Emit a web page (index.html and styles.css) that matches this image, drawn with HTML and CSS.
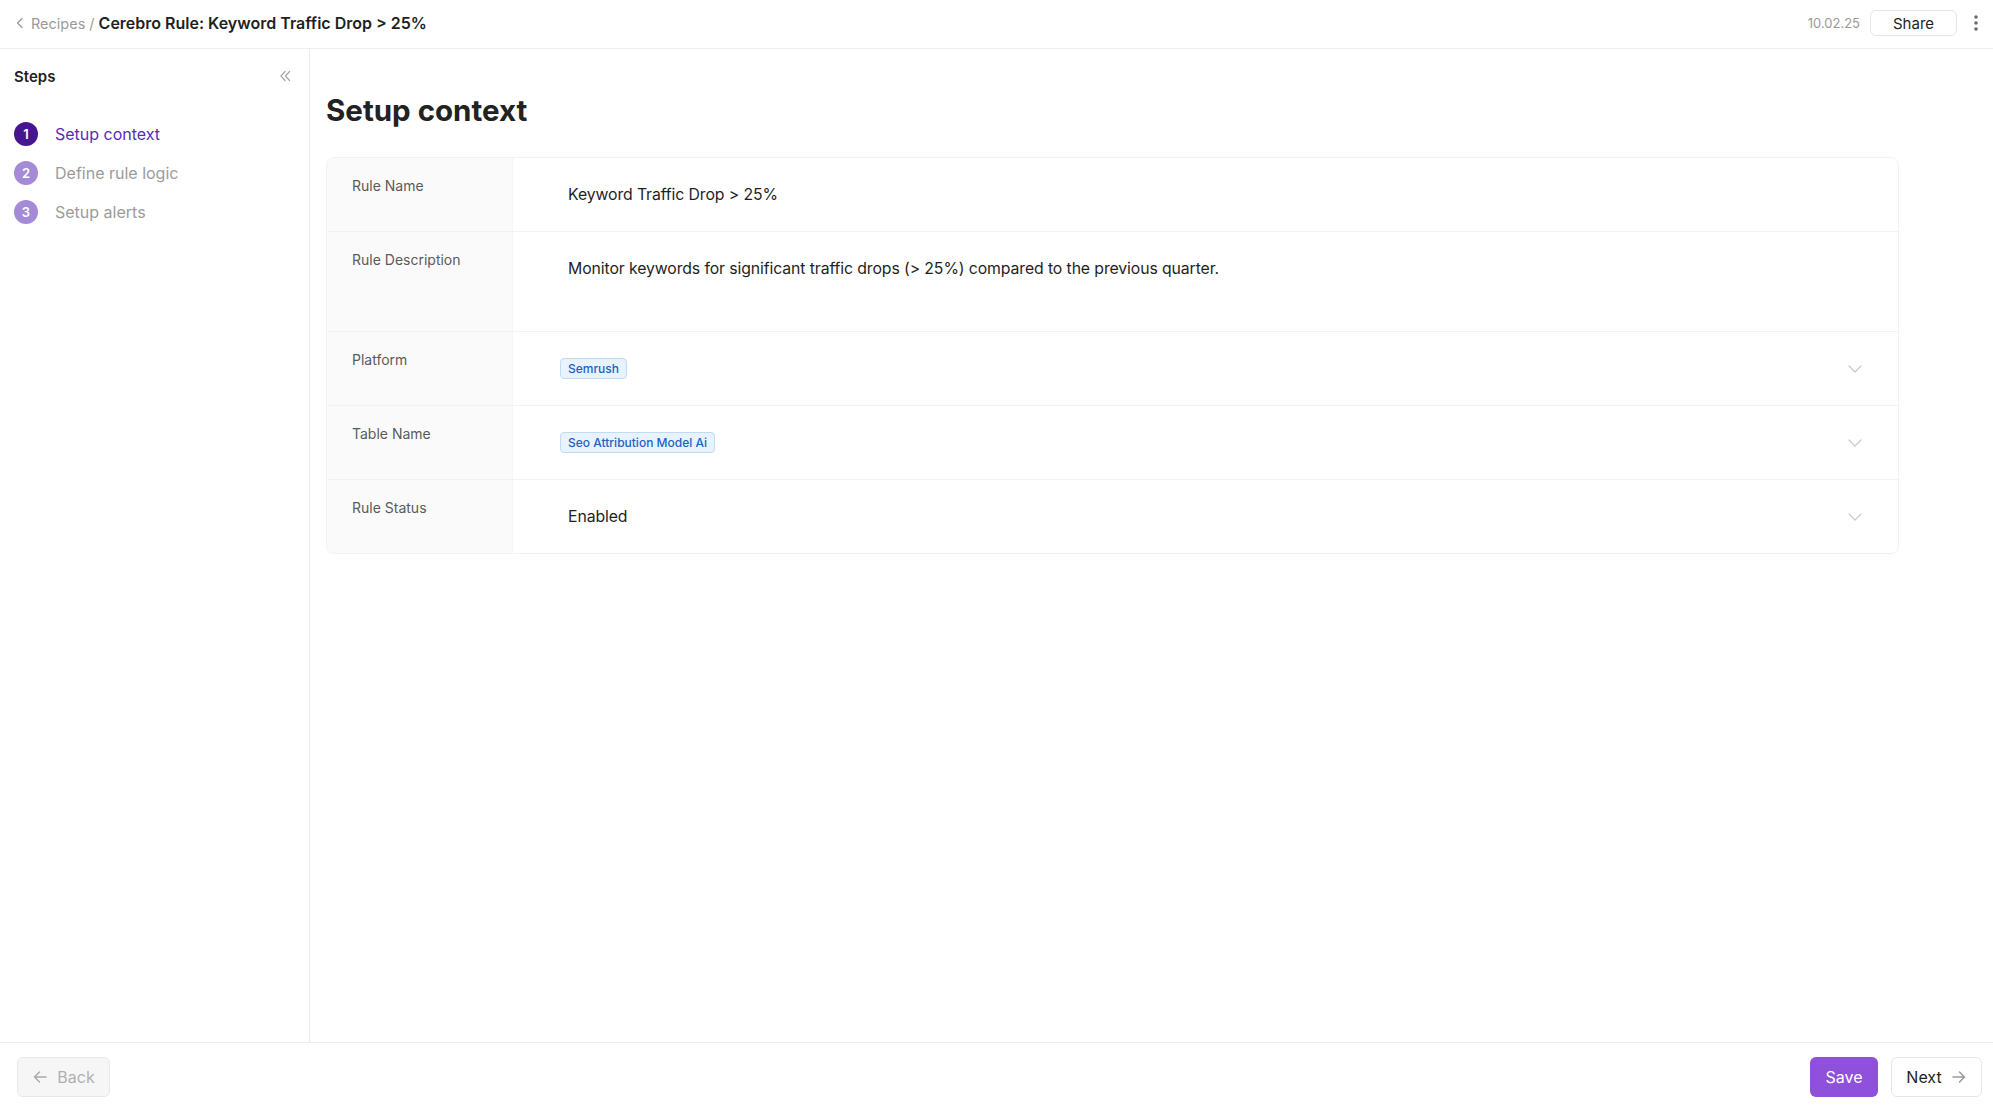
FILE: index.html
```html
<!DOCTYPE html>
<html lang="en">
<head>
    <meta charset="UTF-8">
    <meta name="viewport" content="width=device-width, initial-scale=1.0">
    <title>Cerebro Rule: Keyword Traffic Drop &gt; 25%</title>
    <link rel="stylesheet" href="styles.css">
</head>
<body>
    <header class="topbar">
        <div class="crumbs">
            <svg class="crumb-back" width="10" height="12" viewBox="0 0 10 12"><path d="M7 1.5 2.5 6 7 10.5" fill="none" stroke="#9a9a9a" stroke-width="1.3" stroke-linecap="round" stroke-linejoin="round"/></svg>
            <a href="#" class="crumb-link">Recipes</a>
            <span class="crumb-sep">/</span>
            <span class="crumb-title">Cerebro Rule: Keyword Traffic Drop &gt; 25%</span>
        </div>
        <div class="top-actions">
            <span class="date">10.02.25</span>
            <button class="share-btn">Share</button>
            <svg class="kebab" width="6" height="18" viewBox="0 0 6 18"><circle cx="3" cy="3" r="1.8" fill="#6b6b6b"/><circle cx="3" cy="9" r="1.8" fill="#6b6b6b"/><circle cx="3" cy="15" r="1.8" fill="#6b6b6b"/></svg>
        </div>
    </header>

    <div class="layout">
        <aside class="sidebar">
            <div class="sidebar-head">
                <span class="sidebar-title">Steps</span>
                <svg width="14" height="14" viewBox="0 0 14 14"><path d="M7 2.5 3 7l4 4.5M11.5 2.5 7.5 7l4 4.5" fill="none" stroke="#a5a5a5" stroke-width="1.2" stroke-linecap="round" stroke-linejoin="round"/></svg>
            </div>
            <ul class="steps">
                <li class="step active"><span class="step-num">1</span>Setup context</li>
                <li class="step"><span class="step-num">2</span>Define rule logic</li>
                <li class="step"><span class="step-num">3</span>Setup alerts</li>
            </ul>
        </aside>

        <main class="content">
            <h1>Setup context</h1>

            <div class="form-card">
                <div class="form-row">
                    <div class="form-label">Rule Name</div>
                    <div class="form-value"><span class="value-text">Keyword Traffic Drop &gt; 25%</span></div>
                </div>
                <div class="form-row">
                    <div class="form-label">Rule Description</div>
                    <div class="form-value tall"><span class="value-text">Monitor keywords for significant traffic drops (&gt; 25%) compared to the previous quarter.</span></div>
                </div>
                <div class="form-row">
                    <div class="form-label">Platform</div>
                    <div class="form-value select">
                        <span class="tag">Semrush</span>
                        <svg class="chev" width="14" height="8" viewBox="0 0 14 8"><path d="M1 1l6 6 6-6" fill="none" stroke="#c9c9c9" stroke-width="1.2" stroke-linecap="round" stroke-linejoin="round"/></svg>
                    </div>
                </div>
                <div class="form-row">
                    <div class="form-label">Table Name</div>
                    <div class="form-value select">
                        <span class="tag">Seo Attribution Model Ai</span>
                        <svg class="chev" width="14" height="8" viewBox="0 0 14 8"><path d="M1 1l6 6 6-6" fill="none" stroke="#c9c9c9" stroke-width="1.2" stroke-linecap="round" stroke-linejoin="round"/></svg>
                    </div>
                </div>
                <div class="form-row">
                    <div class="form-label">Rule Status</div>
                    <div class="form-value select">
                        <span class="value-text">Enabled</span>
                        <svg class="chev" width="14" height="8" viewBox="0 0 14 8"><path d="M1 1l6 6 6-6" fill="none" stroke="#c9c9c9" stroke-width="1.2" stroke-linecap="round" stroke-linejoin="round"/></svg>
                    </div>
                </div>
            </div>
        </main>
    </div>

    <footer class="footer">
        <button class="btn btn-back" disabled>
            <svg width="16" height="14" viewBox="0 0 16 14"><path d="M14 7H2.5M7.5 2 2.5 7l5 5" fill="none" stroke="#ababab" stroke-width="1.5" stroke-linecap="round" stroke-linejoin="round"/></svg>
            Back
        </button>
        <div class="footer-right">
            <button class="btn btn-save">Save</button>
            <button class="btn btn-next">
                Next
                <svg width="16" height="14" viewBox="0 0 16 14"><path d="M2 7h11.5M8.5 2l5 5-5 5" fill="none" stroke="#9a9a9a" stroke-width="1.5" stroke-linecap="round" stroke-linejoin="round"/></svg>
            </button>
        </div>
    </footer>
</body>
</html>
```

FILE: styles.css
```css
* {
    box-sizing: border-box;
}

body {
    margin: 0;
    height: 100vh;
    display: flex;
    flex-direction: column;
    font-family: 'Inter', 'Liberation Sans', sans-serif;
    color: #1f1f1f;
    background-color: #fff;
}

/* top bar */
.topbar {
    height: 49px;
    flex-shrink: 0;
    display: flex;
    align-items: center;
    justify-content: space-between;
    padding: 0 14px 2px 15px;
    border-bottom: 1px solid #efefef;
}

.crumbs {
    display: flex;
    align-items: center;
    font-size: 16px;
}

.crumb-back {
    margin-right: 6px;
}

.crumb-link {
    color: #9a9a9a;
    text-decoration: none;
    font-size: 14.5px;
}

.crumb-sep {
    color: #9a9a9a;
    margin: 0 4px;
    font-size: 14.5px;
}

.crumb-title {
    font-weight: 600;
    color: #1f1f1f;
}

.top-actions {
    display: flex;
    align-items: center;
}

.date {
    font-size: 13px;
    color: #9a9a9a;
    margin-right: 10px;
}

.share-btn {
    width: 87px;
    height: 26px;
    border: 1px solid #e6e6e6;
    border-radius: 6px;
    background: #fff;
    font-family: inherit;
    font-size: 15px;
    color: #1f1f1f;
    margin-right: 16px;
}

/* layout */
.layout {
    flex: 1;
    display: flex;
    min-height: 0;
}

.sidebar {
    width: 310px;
    flex-shrink: 0;
    border-right: 1px solid #ececec;
    padding: 17px 14px 0 14px;
}

.sidebar-head {
    display: flex;
    align-items: center;
    justify-content: space-between;
    padding-right: 3px;
    height: 20px;
}

.sidebar-title {
    font-size: 15px;
    font-weight: 600;
}

.steps {
    list-style: none;
    margin: 28px 0 0;
    padding: 0;
}

.step {
    display: flex;
    align-items: center;
    height: 39px;
    font-size: 16px;
    color: #9b9b9b;
}

.step-num {
    width: 24px;
    height: 24px;
    border-radius: 50%;
    background-color: #a58ad8;
    color: #fff;
    font-size: 13px;
    font-weight: 600;
    display: flex;
    align-items: center;
    justify-content: center;
    margin-right: 17px;
}

.step.active {
    color: #5a2bb8;
}

.step.active .step-num {
    background-color: #45168f;
}

/* main */
.content {
    flex: 1;
    padding: 43px 94px 0 16px;
}

.content h1 {
    margin: 0 0 29px;
    font-size: 29.5px;
    line-height: 36px;
    font-weight: 700;
    color: #222;
}

.form-card {
    border: 1px solid #f2f2f2;
    border-radius: 8px;
    overflow: hidden;
}

.form-row {
    display: flex;
    border-bottom: 1px solid #f2f2f2;
}

.form-row:last-child {
    border-bottom: none;
}

.form-label {
    width: 186px;
    flex-shrink: 0;
    background-color: #fafafa;
    border-right: 1px solid #f5f5f5;
    padding: 18px 0 0 25px;
    font-size: 14px;
    line-height: 20px;
    color: #5a5a5a;
}

.form-value {
    flex: 1;
    min-height: 73px;
    display: flex;
    align-items: center;
    padding: 0 36px 0 47px;
    font-size: 15.8px;
}

.form-value.tall {
    min-height: 99px;
    align-items: flex-start;
    padding-top: 25px;
}

.form-value.select {
    justify-content: space-between;
}

.value-text {
    padding-left: 8px;
    line-height: 24px;
    color: #1f1f1f;
    letter-spacing: -0.1px;
}

.tag {
    font-size: 12px;
    font-weight: 500;
    line-height: 19px;
    padding: 0 7px;
    border: 1px solid #bfdcf7;
    border-radius: 4px;
    background-color: #e8f3fe;
    color: #1c63c4;
}

/* footer */
.footer {
    height: 65px;
    flex-shrink: 0;
    border-top: 1px solid #ececec;
    display: flex;
    align-items: flex-start;
    justify-content: space-between;
    padding: 14px 11px 0 17px;
}

.footer-right {
    display: flex;
    gap: 13px;
}

.btn {
    height: 40px;
    border-radius: 6px;
    font-family: inherit;
    font-size: 16px;
    display: flex;
    align-items: center;
    gap: 9px;
    cursor: pointer;
}

.btn-back {
    width: 93px;
    justify-content: center;
    background-color: #f6f6f6;
    border: 1px solid #e8e8e8;
    color: #b0b0b0;
}

.btn-save {
    width: 68px;
    justify-content: center;
    background-color: #8f50dc;
    border: none;
    color: #fff;
}

.btn-next {
    width: 91px;
    justify-content: center;
    background-color: #fff;
    border: 1px solid #e6e6e6;
    color: #1f1f1f;
}
```
